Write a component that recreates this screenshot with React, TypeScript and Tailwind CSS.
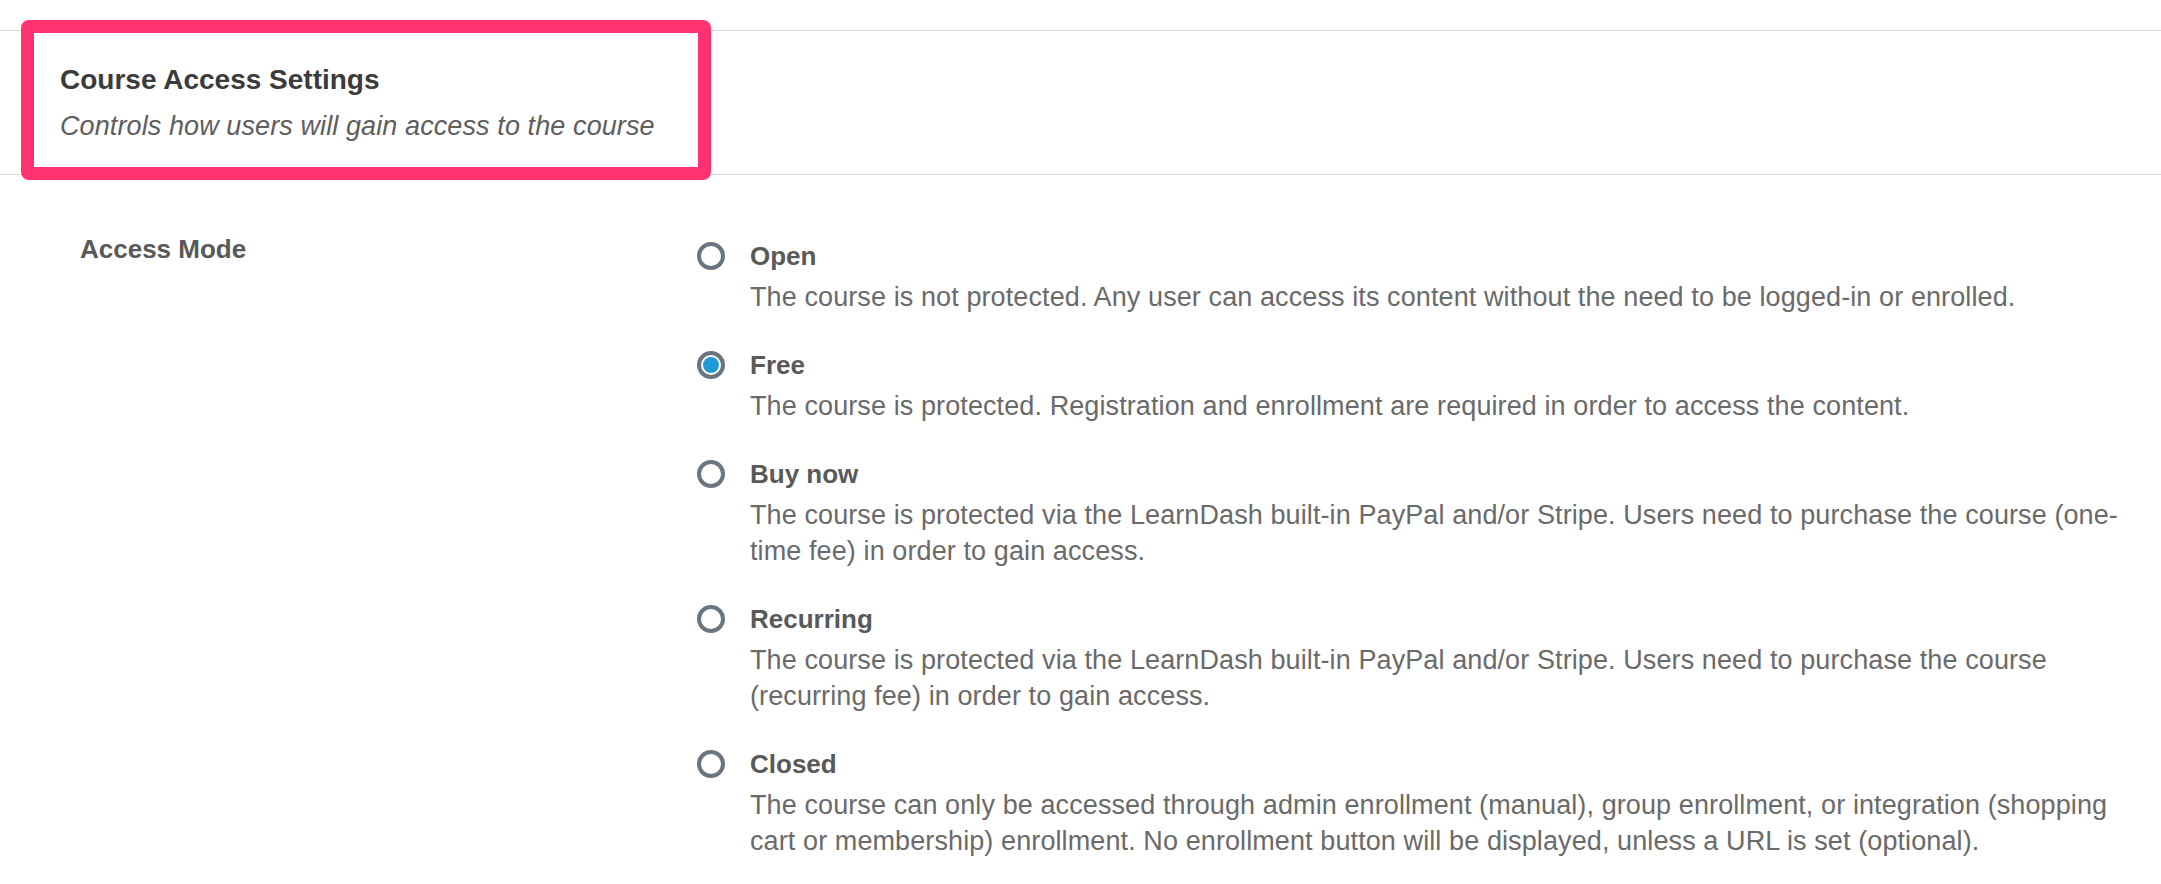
import React from "react";

const options = [
  {
    label: "Open",
    checked: false,
    lines: [
      "The course is not protected. Any user can access its content without the need to be logged-in or enrolled.",
    ],
  },
  {
    label: "Free",
    checked: true,
    lines: ["The course is protected. Registration and enrollment are required in order to access the content."],
  },
  {
    label: "Buy now",
    checked: false,
    lines: [
      "The course is protected via the LearnDash built-in PayPal and/or Stripe. Users need to purchase the course (one-",
      "time fee) in order to gain access.",
    ],
  },
  {
    label: "Recurring",
    checked: false,
    lines: [
      "The course is protected via the LearnDash built-in PayPal and/or Stripe. Users need to purchase the course",
      "(recurring fee) in order to gain access.",
    ],
  },
  {
    label: "Closed",
    checked: false,
    lines: [
      "The course can only be accessed through admin enrollment (manual), group enrollment, or integration (shopping",
      "cart or membership) enrollment. No enrollment button will be displayed, unless a URL is set (optional).",
    ],
  },
];

function Radio({ checked }: { checked: boolean }) {
  return (
    <span className="flex h-[28px] w-[28px] shrink-0 items-center justify-center rounded-full border-[4px] border-[#6b7580] bg-white">
      {checked && <span className="h-[16px] w-[16px] rounded-full bg-[#1e9bd4]" />}
    </span>
  );
}

export default function App() {
  return (
    <div className="min-h-[884px] w-full bg-white font-['Liberation_Sans',Arial,sans-serif]">
      <div className="relative pt-[30px]">
        <div className="border-y border-[#dcdcde] pl-[60px] pt-[31px] pb-[30px]">
          <h2 className="text-[28px] font-bold leading-[36px] text-[#3b3b3b]">Course Access Settings</h2>
          <p className="mt-[10px] text-[27px] italic leading-[36px] tracking-[0.1px] text-[#5e5e5e]">
            Controls how users will gain access to the course
          </p>
        </div>
        <div className="pointer-events-none absolute left-[21px] top-[20px] h-[160px] w-[690px] rounded-[8px] border-[13px] border-[#ff3170]" />
      </div>

      <div className="flex pt-[56px]">
        <div className="w-[697px] shrink-0 pl-[80px] text-[26px] font-bold leading-[36px] text-[#595959]">
          Access Mode
        </div>
        <div className="flex flex-col gap-[32px] pt-[7px]">
          {options.map((o) => (
            <div key={o.label}>
              <div className="flex items-center gap-[25px]">
                <Radio checked={o.checked} />
                <span className="text-[26px] font-bold leading-[36px] text-[#595959]">{o.label}</span>
              </div>
              <div className="mt-[5px] pl-[53px] text-[27px] leading-[36px] tracking-[0.1px] text-[#6a6a6a]">
                {o.lines.map((l, i) => (
                  <div key={i} className="whitespace-nowrap">
                    {l}
                  </div>
                ))}
              </div>
            </div>
          ))}
        </div>
      </div>
    </div>
  );
}
